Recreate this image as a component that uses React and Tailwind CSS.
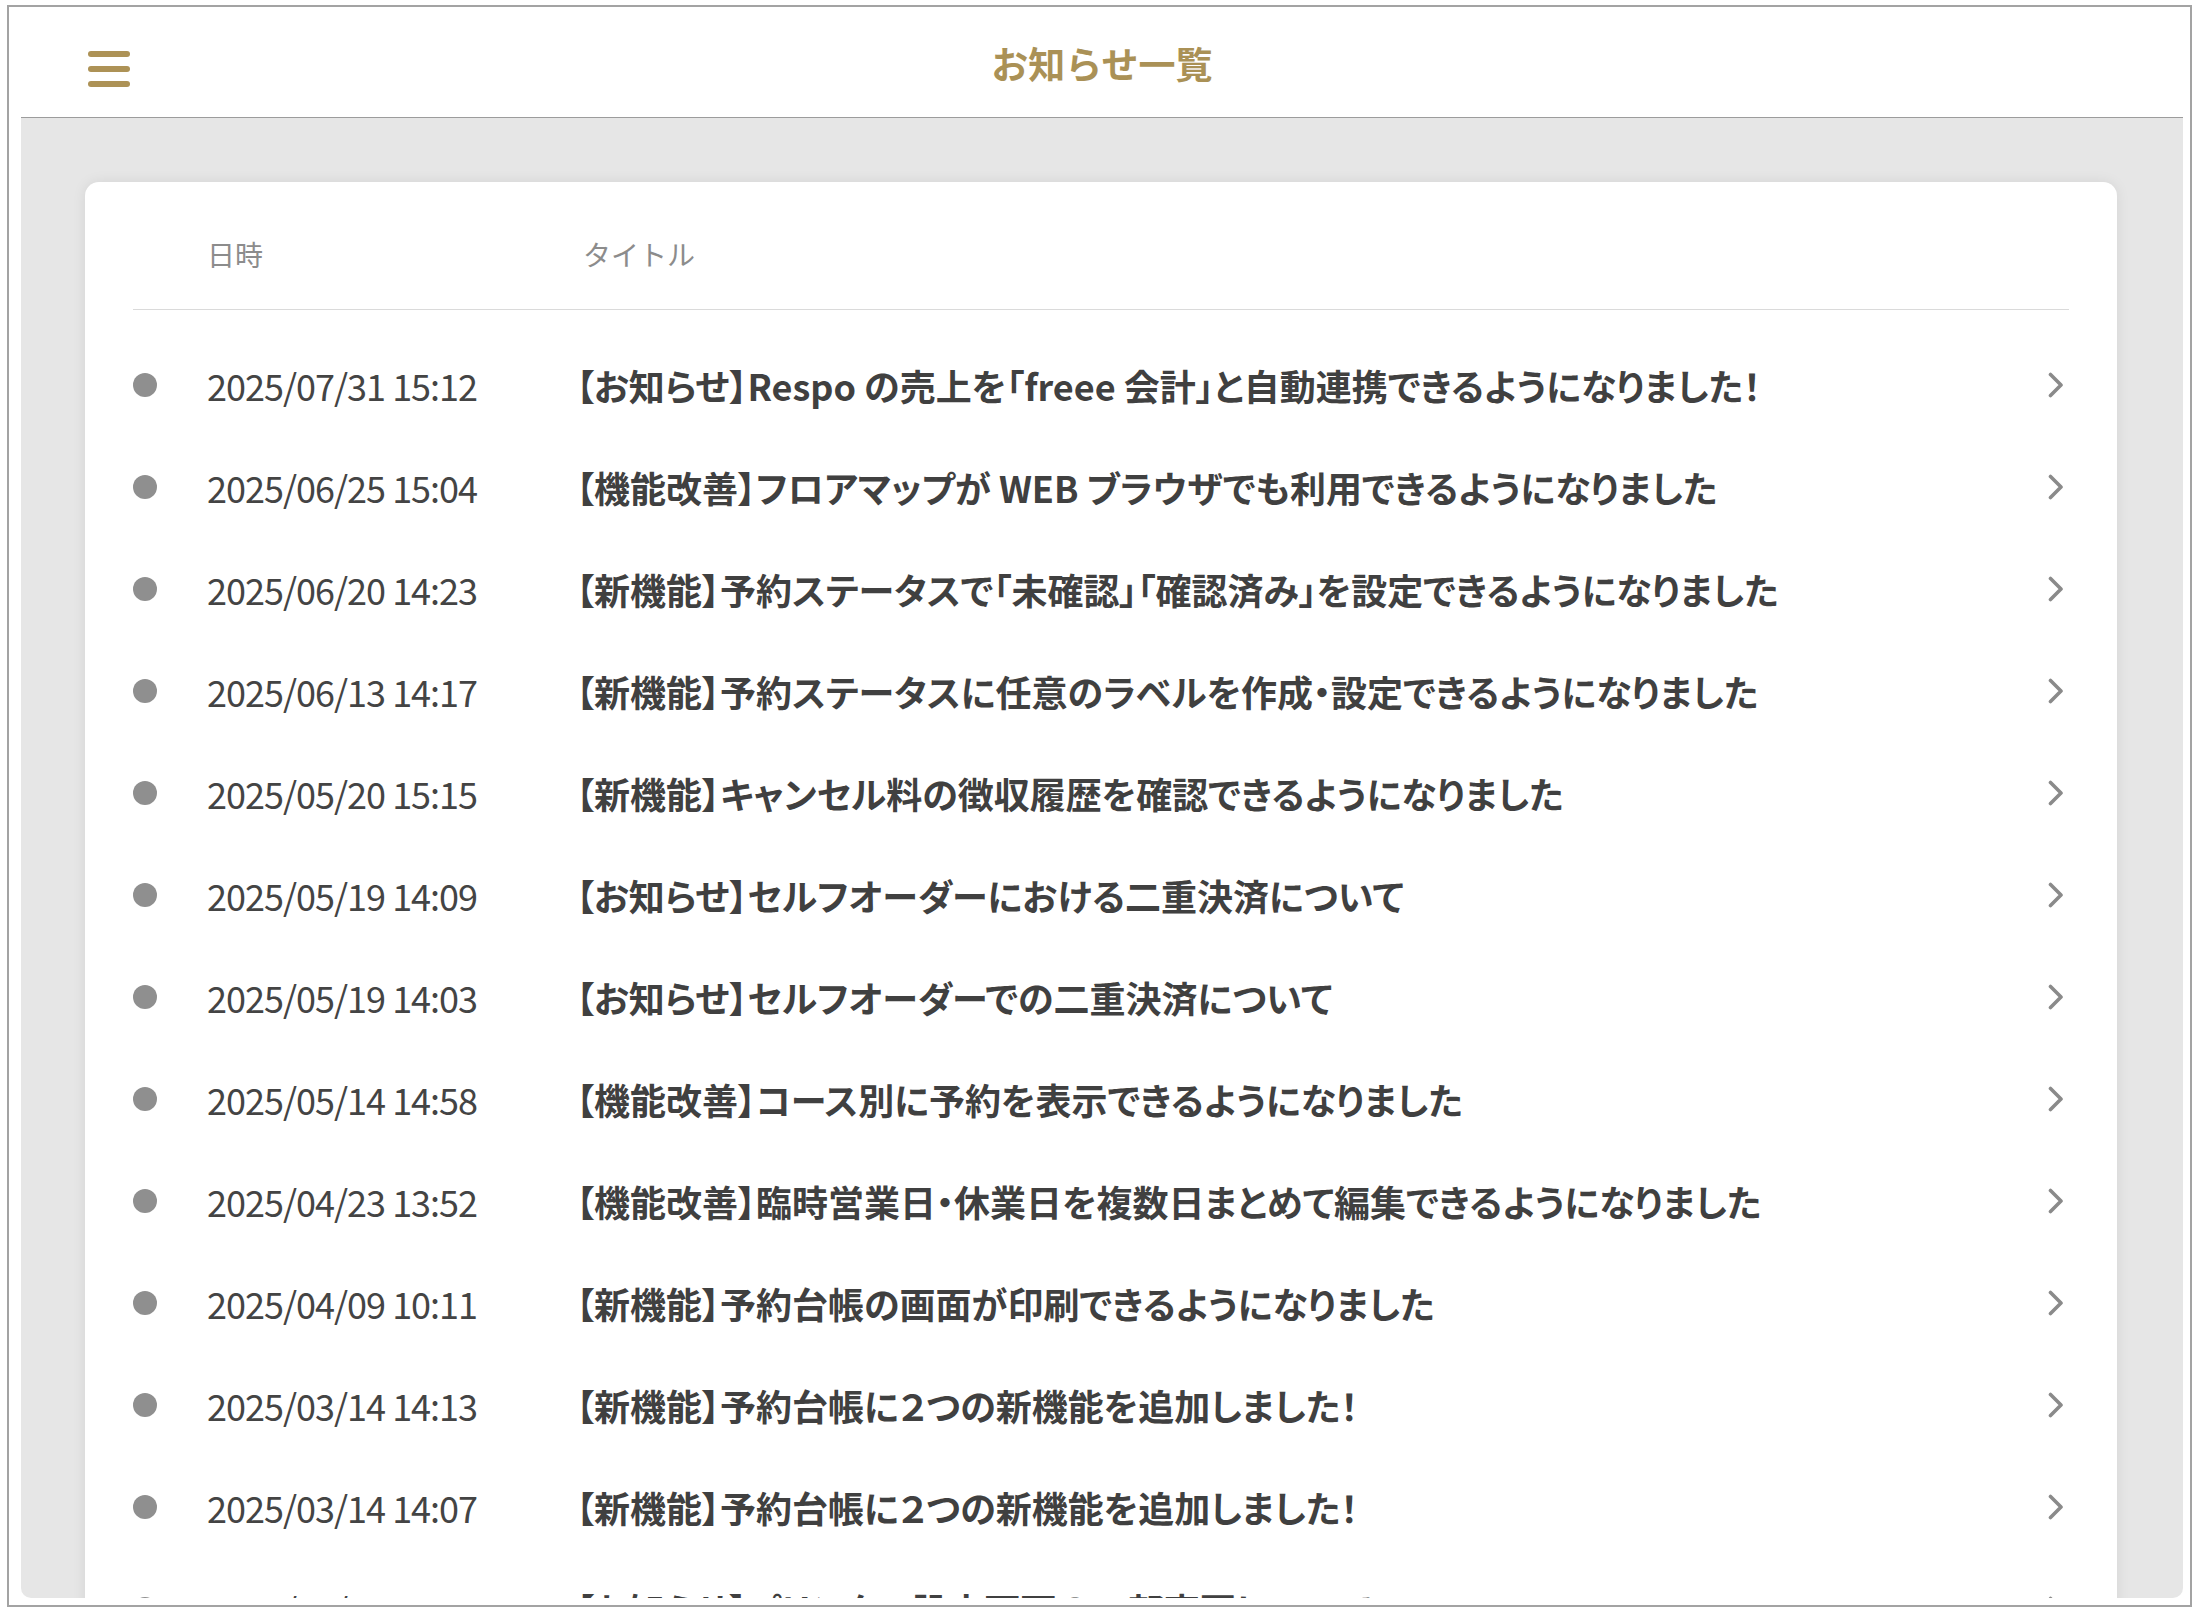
import React from 'react';

const notices = [
  { date: '2025/07/31 15:12', title: '【お知らせ】Respo の売上を「freee 会計」と自動連携できるようになりました！' },
  { date: '2025/06/25 15:04', title: '【機能改善】フロアマップが WEB ブラウザでも利用できるようになりました' },
  { date: '2025/06/20 14:23', title: '【新機能】予約ステータスで「未確認」「確認済み」を設定できるようになりました' },
  { date: '2025/06/13 14:17', title: '【新機能】予約ステータスに任意のラベルを作成・設定できるようになりました' },
  { date: '2025/05/20 15:15', title: '【新機能】キャンセル料の徴収履歴を確認できるようになりました' },
  { date: '2025/05/19 14:09', title: '【お知らせ】セルフオーダーにおける二重決済について' },
  { date: '2025/05/19 14:03', title: '【お知らせ】セルフオーダーでの二重決済について' },
  { date: '2025/05/14 14:58', title: '【機能改善】コース別に予約を表示できるようになりました' },
  { date: '2025/04/23 13:52', title: '【機能改善】臨時営業日・休業日を複数日まとめて編集できるようになりました' },
  { date: '2025/04/09 10:11', title: '【新機能】予約台帳の画面が印刷できるようになりました' },
  { date: '2025/03/14 14:13', title: '【新機能】予約台帳に２つの新機能を追加しました！' },
  { date: '2025/03/14 14:07', title: '【新機能】予約台帳に２つの新機能を追加しました！' },
  { date: '2025/03/04 16:00', title: '【お知らせ】プリンター設定画面の一部変更について' },
];

const Chevron = () => (
  <svg width="16" height="26" viewBox="0 0 16 26" fill="none">
    <path d="M2.5 2.5 L13 13 L2.5 23.5" stroke="#8a8a8a" strokeWidth="3.6" strokeLinecap="round" strokeLinejoin="round" />
  </svg>
);

const Hamburger = () => (
  <div className="flex flex-col gap-[9px] w-[42px]">
    <div className="h-[6px] rounded-full bg-[#ad9256]"></div>
    <div className="h-[6px] rounded-full bg-[#ad9256]"></div>
    <div className="h-[6px] rounded-full bg-[#ad9256]"></div>
  </div>
);

const NoticeRow = ({ date, title }) => (
  <div className="flex items-center h-[102px]">
    <div className="w-[24px] h-[24px] rounded-full bg-[#8f8f8f] shrink-0"></div>
    <div className="ml-[50px] w-[369px] shrink-0 text-[36px] text-[#444444] leading-normal tracking-[-1px] whitespace-nowrap">{date}</div>
    <div className="flex-1 min-w-0 whitespace-nowrap text-[36px] font-bold text-[#404040] leading-normal [font-feature-settings:'palt']">
      {title}
    </div>
    <div className="mr-[5px] shrink-0 flex items-center">
      <Chevron />
    </div>
  </div>
);

export default function App() {
  return (
    <div className="w-[2198px] h-[1612px] bg-white overflow-hidden font-['Noto_Sans_CJK_JP','Noto_Sans',sans-serif]">
      <div className="ml-[7px] mt-[5px] w-[2185px] h-[1602px] border-2 border-[#a3a3a3] pl-[12px] pr-[7px] pb-[7px] flex flex-col">
        {/* Header */}
        <div className="h-[111px] shrink-0 relative flex items-center justify-center border-b border-[#9c9c9c]">
          <div className="absolute left-[67px] top-[44px]">
            <Hamburger />
          </div>
          <h1 className="text-[37px] font-bold text-[#aa9156] leading-normal mt-[4px]">お知らせ一覧</h1>
        </div>

        {/* Content */}
        <div className="flex-1 bg-[#e6e6e6] rounded-b-[10px] overflow-hidden pl-[64px] pr-[66px] pt-[64px]">
          <div className="bg-white rounded-[14px] shadow-[0_0_14px_rgba(0,0,0,0.08)] px-[48px] min-h-[1500px]">
            <div className="h-[128px] pt-[44px] pb-[28px] flex items-center border-b border-[#dadada] text-[28px] text-[#8c8c8c] leading-normal">
              <div className="ml-[74px] w-[376px]">日時</div>
              <div>タイトル</div>
            </div>
            <div className="pt-[24px]">
              {notices.map((n, i) => (
                <NoticeRow key={i} date={n.date} title={n.title} />
              ))}
            </div>
          </div>
        </div>
      </div>
    </div>
  );
}
